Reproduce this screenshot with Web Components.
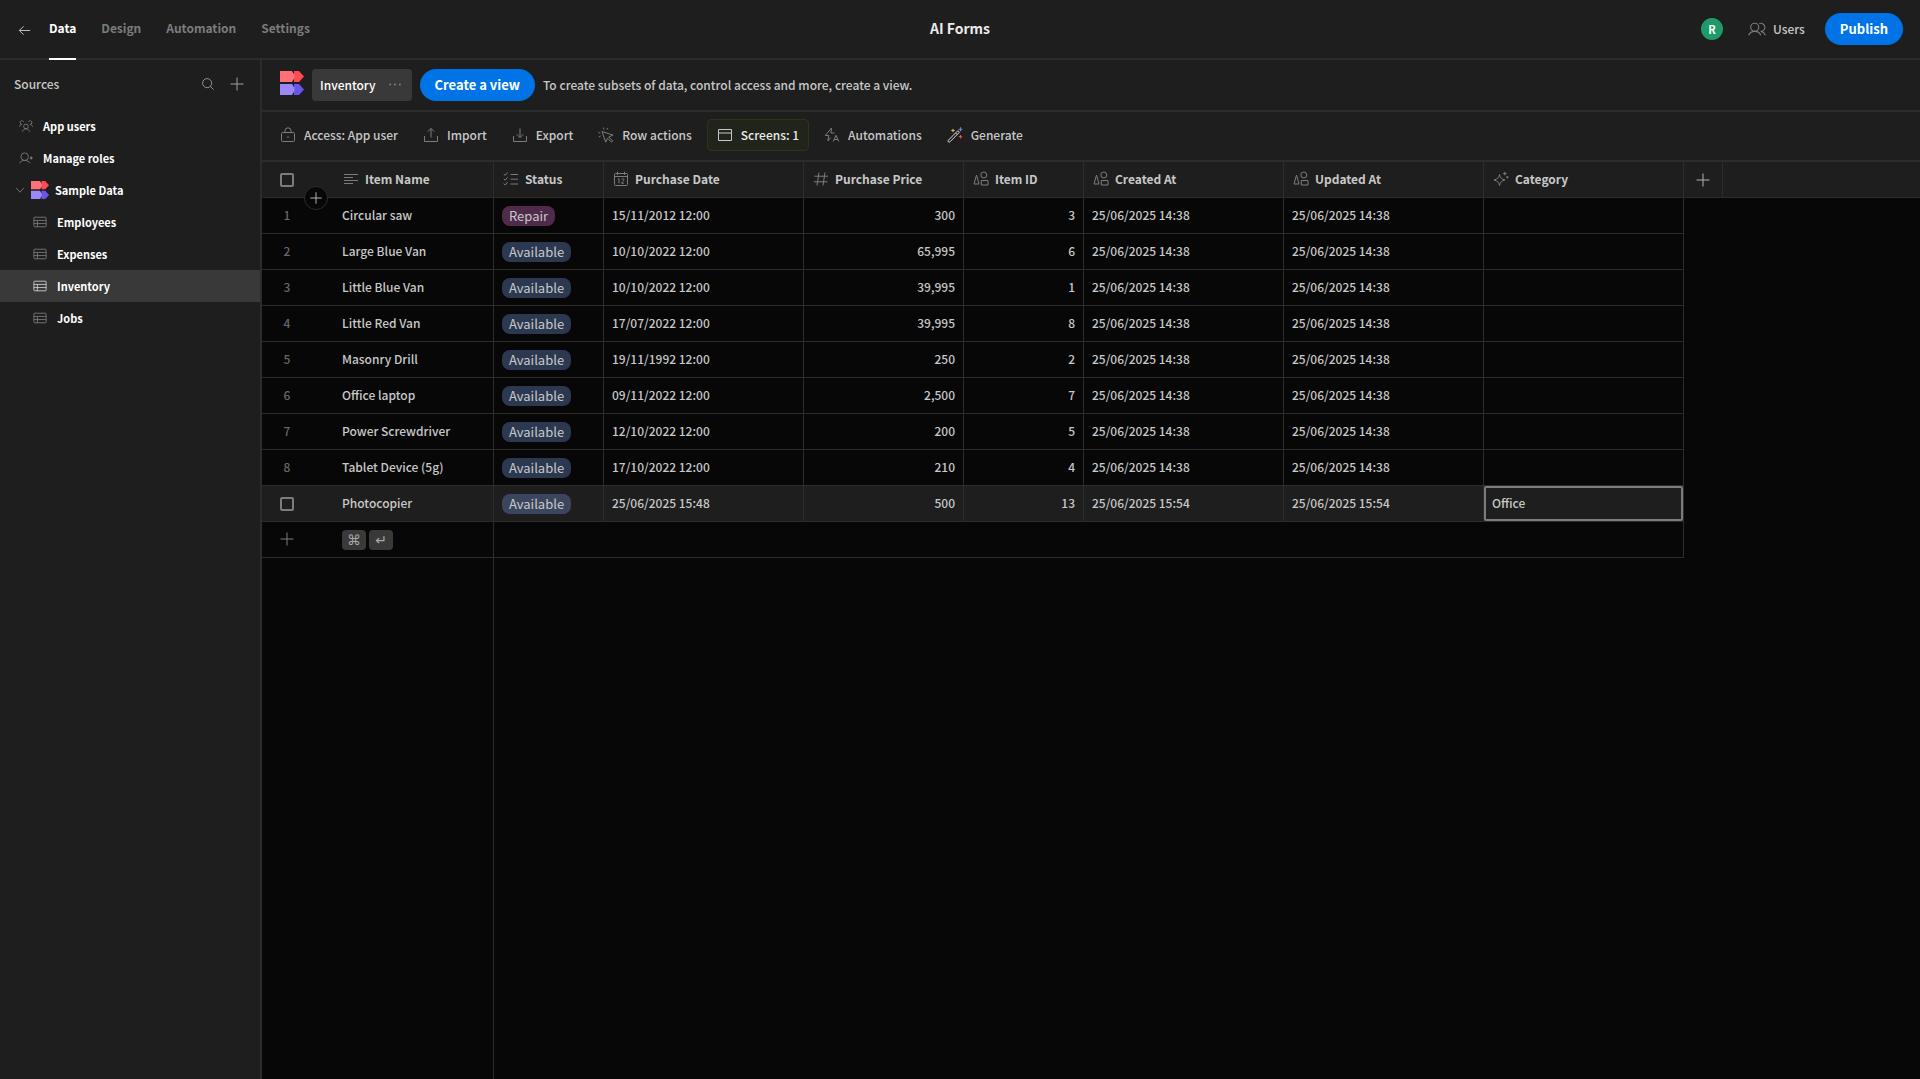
<!DOCTYPE html>
<html lang="en">
<head>
<meta charset="utf-8">
<meta name="viewport" content="width=device-width, initial-scale=1">
<title>AI Forms</title>
<style>
	:root{
		--bg:#1e1e1e;
		--bg-grid:#070707;
		--line:#2c2c2c;
		--hover:#393939;
		--text:#c8c8c8;
		--text-strong:#ebebeb;
		--muted:#7c7c7c;
		--accent:#0073e6;
	}
	body{
		margin:0;
		background:var(--bg-grid);
		color:var(--text);
		font:500 12px/20px "Noto Sans CJK SC","Noto Sans",sans-serif;
	}
</style>
</head>
<body>
<app-shell>
	<top-bar slot="top"></top-bar>
	<source-panel slot="side">
		<source-item icon="group">App users</source-item>
		<source-item icon="role">Manage roles</source-item>
		<source-item icon="logo" open>Sample Data</source-item>
		<source-item icon="table" nested>Employees</source-item>
		<source-item icon="table" nested>Expenses</source-item>
		<source-item icon="table" nested selected>Inventory</source-item>
		<source-item icon="table" nested>Jobs</source-item>
	</source-panel>
	<view-bar></view-bar>
	<tool-bar>
		<tool-button icon="lock">Access: App user</tool-button>
		<tool-button icon="upload">Import</tool-button>
		<tool-button icon="download">Export</tool-button>
		<tool-button icon="cursor">Row actions</tool-button>
		<tool-button icon="screen" active>Screens: 1</tool-button>
		<tool-button icon="bolt">Automations</tool-button>
		<tool-button icon="wand">Generate</tool-button>
	</tool-bar>
	<data-grid></data-grid>
</app-shell>

<script>
const icons={
	back:`<path d="M14 8H2.5M7 3.5 2.5 8 7 12.5"/>`,
	search:`<circle cx="7" cy="7" r="5.2"/><path d="m10.8 10.8 3.7 3.7"/>`,
	plus:`<path d="M8 1.5v13M1.5 8h13"/>`,
	chevron:`<path d="m3.5 5.5 4.5 5 4.5-5"/>`,
	group:`<circle cx="8" cy="8.5" r="2.7"/><path d="M3.8 14.5c.6-2 2.2-3.3 4.2-3.3s3.6 1.3 4.2 3.3M.6 8.8c.2-1.400 1.200-2.400 2.700-2.600M3.300 6.200a2.100 2.100 0 1 1 2-3M15.400 8.800c-.2-1.400-1.200-2.400-2.700-2.600M12.700 6.200a2.100 2.100 0 1 0-2-3"/>`,
	role:`<circle cx="6.500" cy="6.500" r="4.300"/><path d="M.5 14c1-2.100 3-3.200 6-3.200s5 1.100 6 3.200"/><path fill="currentColor" d="m14 6.500 1.200 1.500L14 9.500 12.800 8z"/>`,
	table:`<rect x="1" y="2.500" width="14" height="11" rx="1"/><path d="M1 6.200h14M1 9.800h14M5 6.200v7.300"/>`,
	users:`<circle cx="6" cy="6.500" r="3.600"/><path d="M.6 13.500c1-2.200 2.900-3.400 5.400-3.400s4.400 1.200 5.400 3.400M10 3.200a3.600 3.600 0 1 1 1.600 6.900c1.700.3 3 1.500 3.900 3.400"/>`,
	dots:`<g fill="currentColor" stroke="none"><circle cx="2.500" cy="7.500" r="1.200"/><circle cx="8" cy="7.500" r="1.200"/><circle cx="13.500" cy="7.500" r="1.200"/></g>`,
	lock:`<rect x="1.500" y="5.500" width="13" height="9" rx="1"/><path d="M5 5.500V3.800a3 3 0 0 1 6 0v1.700"/><circle cx="8" cy="10" r=".4"/>`,
	upload:`<path d="M1.500 9v5.500h13V9M8 10.500v-9M4.800 4.600 8 1.400l3.200 3.200"/>`,
	download:`<path d="M1.500 9v5.500h13V9M8 1.500v9M4.800 7.400 8 10.600l3.200-3.200"/>`,
	cursor:`<path d="m4 4.500 11 3.600-4.300 1.900 4 4-1.200 1.200-4-4-1.800 4zM6 2.500 5.500.6M9 2.600l1-1.800M2.300 6 .5 5.600M2.600 9l-1.800 1"/>`,
	screen:`<path d="M1.500 2.500h13v11h-13zM1.500 6h13"/>`,
	bolt:`<path d="M7.500 1 1.300 8.500h3.500l-1 5.500 2.900-3.300M7.500 1l-.6 5h3.600M9.300 14.500l2.600-6.200 2.900 6.200M10.300 12.500h3.500"/>`,
	wand:`<path stroke="#d8d8d8" d="M1.300 13.300 10.200 4.300a1 1 0 0 1 1.600 1.600L3 14.800a1 1 0 0 1-1.700-1.500zM8.600 6l1.500 1.500"/><path stroke="#e3c04c" d="M6 1.800v3.400M4.300 3.500h3.400"/><path stroke="#7b83f0" d="M13.500.3v4M11.500 2.300h4"/><path stroke="#f2555f" d="M13.500 8v3.400M11.800 9.700h3.400"/>`,
	lines:`<path d="M1 3.500h14M1 6.500h9M1 9.500h14M1 12.500h9"/>`,
	checks:`<path d="m.8 3 1.400 1.400L4.600 1.500M.8 7.800l1.400 1.400 2.400-2.900M.8 12.600 2.200 14l2.400-2.900M7.500 3.500H15M7.500 8.200H15M7.500 13H15"/>`,
	calendar:`<rect x="1.500" y="2.500" width="13" height="12" rx="1"/><path d="M1.500 5.500h13M4.500.8v3M11.500.8v3M5 8.300l1-.6v4.600M8.500 8.300c.6-1 2.500-.8 2.400.5 0 1-1.600 2-2.500 3.400H11"/>`,
	hash:`<path d="M6 1.500 4 14.500M12 1.500l-2 13M1.500 5.200h13.500M1 10.800h13.500"/>`,
	shapes:`<path d="M3.500 4 1 13h5z"/><circle cx="10.800" cy="4" r="3"/><rect x="8.300" y="9.500" width="6.700" height="4.500"/>`,
	sparkle:`<path d="M6.500 3.500c.7 3.300 2 4.600 5.500 5.500-3.500.9-4.800 2.200-5.500 5.500C5.800 11.200 4.500 9.900 1 9c3.500-.9 4.800-2.200 5.500-5.500zM11.800.8v3.600M10 2.600h3.600M14.300 5v2.400M13.100 6.200h2.400"/>`
}

const logo=`<svg viewBox="0 0 24 24">
	<path fill="#ff4954" d="M14 0h5l5 5.500-5 5.500h-5z"/>
	<path fill="#ff7077" d="M0 0h12l2.500 4v3L12 11H0z"/>
	<path fill="#6a55ea" d="M14 13h5l5 5.500-5 5.500h-5z"/>
	<path fill="#9b88f8" d="M0 13h12l2.500 4v3L12 24H0z"/>
</svg>`

//shared reset for the controls inside each shadow root
const base=`
	*{box-sizing:border-box;}
	button,a{
		font:inherit;
		color:inherit;
		text-decoration:none;
		white-space:nowrap;
	}
	button{
		padding:0;
		border:0;
		background:none;
		cursor:pointer;
	}
	.cta{
		height:32px;
		padding:0 15px;
		border-radius:16px;
		background:var(--accent);
		color:#fff;
		font-size:13px;
		font-weight:700;
	}
`

class AppIcon extends HTMLElement{
	constructor(){
		super()
		this.attachShadow({mode:"open"})
	}

	connectedCallback(){
		let name=this.getAttribute("name")
		this.shadowRoot.innerHTML=`
			<style>
				:host{
					display:block;
					flex:none;
					width:16px;
					height:16px;
					color:var(--muted);
				}
				svg{
					display:block;
					width:100%;
					height:100%;
				}
			</style>
			${name=="logo"?logo:`<svg viewBox="0 0 16 16" fill="none" stroke="currentColor" stroke-linejoin="round" aria-hidden="true">${icons[name]}</svg>`}
		`
	}
}
customElements.define("app-icon",AppIcon)

class AppShell extends HTMLElement{
	constructor(){
		super()
		this.attachShadow({mode:"open"})
		this.shadowRoot.innerHTML=`
			<style>
				:host{
					display:flex;
					flex-direction:column;
					min-height:100vh;
				}
				.body{
					display:flex;
					flex:1;
				}
				main{
					display:flex;
					flex-direction:column;
					flex:1;
					min-width:0;
				}
			</style>
			<slot name="top"></slot>
			<div class="body">
				<slot name="side"></slot>
				<main><slot></slot></main>
			</div>
		`
	}
}
customElements.define("app-shell",AppShell)

class TopBar extends HTMLElement{
	constructor(){
		super()
		this.attachShadow({mode:"open"})
		this.shadowRoot.innerHTML=`
			<style>
				${base}
				:host{
					display:grid;
					grid-template-columns:1fr auto 1fr;
					align-items:center;
					height:60px;
					box-sizing:border-box;
					padding:0 17px;
					background:linear-gradient(var(--line),var(--line)) bottom/100% 2px no-repeat var(--bg);
				}
				nav,.right{
					display:flex;
					align-items:center;
				}
				nav{
					gap:25px;
					height:60px;
				}
				nav a{
					height:60px;
					line-height:56px;
					font-weight:700;
					color:var(--muted);
				}
				nav a[aria-current]{
					color:#fff;
					border-bottom:2px solid #fff;
				}
				nav .back{
					display:flex;
					align-items:center;
					margin-right:-8px;
				}
				.back app-icon{
					width:15px;
					height:15px;
					color:var(--text);
				}
				h1{
					margin:0;
					padding-bottom:4px;
					font-size:14px;
					line-height:56px;
					font-weight:700;
					color:var(--text-strong);
				}
				.right{
					justify-content:flex-end;
					padding-bottom:2px;
				}
				.avatar{
					width:22px;
					height:22px;
					border-radius:50%;
					background:#209a6b;
					color:#fff;
					font-size:11px;
					line-height:22px;
					font-weight:700;
					text-align:center;
				}
				.users{
					display:flex;
					align-items:center;
					gap:7px;
					margin:0 20px 0 25px;
				}
				.users app-icon{
					width:18px;
					height:18px;
				}
			</style>
			<nav>
				<a class="back" href="#apps" aria-label="Back"><app-icon name="back"></app-icon></a>
				<a href="#data" aria-current="page">Data</a>
				<a href="#design">Design</a>
				<a href="#automation">Automation</a>
				<a href="#settings">Settings</a>
			</nav>
			<h1>AI Forms</h1>
			<div class="right">
				<div class="avatar">R</div>
				<button class="users"><app-icon name="users"></app-icon>Users</button>
				<button class="cta">Publish</button>
			</div>
		`
	}
}
customElements.define("top-bar",TopBar)

class SourcePanel extends HTMLElement{
	constructor(){
		super()
		this.attachShadow({mode:"open"})
		this.shadowRoot.innerHTML=`
			<style>
				${base}
				:host{
					display:block;
					flex:none;
					width:262px;
					box-sizing:border-box;
					border-right:2px solid var(--line);
					background:var(--bg);
				}
				header{
					display:flex;
					align-items:center;
					gap:14px;
					height:50px;
					padding:0 15px 2px 14px;
				}
				h2{
					flex:1;
					margin:0;
					font:inherit;
				}
				app-icon{
					color:#a0a0a0;
				}
				app-icon[name=search]{
					width:14px;
				}
			</style>
			<header>
				<h2>Sources</h2>
				<button aria-label="Search"><app-icon name="search"></app-icon></button>
				<button aria-label="Add source"><app-icon name="plus"></app-icon></button>
			</header>
			<slot></slot>
		`
	}
}
customElements.define("source-panel",SourcePanel)

class SourceItem extends HTMLElement{
	constructor(){
		super()
		this.attachShadow({mode:"open"})
	}

	connectedCallback(){
		this.shadowRoot.innerHTML=`
			<style>
				${base}
				:host{
					display:block;
				}
				a{
					display:flex;
					align-items:center;
					gap:10px;
					height:32px;
					padding-left:19px;
					font-size:11px;
					font-weight:700;
					color:#fff;
				}
				app-icon{
					width:14px;
					height:14px;
				}
				:host([nested]) a{
					padding-left:33px;
				}
				:host([selected]) a{
					background:var(--hover);
				}
				:host([selected]) app-icon{
					color:#d0d0d0;
				}
				:host([open]) a{
					gap:4px;
					padding-left:13px;
				}
				app-icon[name=logo]{
					width:18px;
					height:18px;
					margin-right:2px;
				}
			</style>
			<a href="#source">
				${this.hasAttribute("open")?`<app-icon name="chevron"></app-icon>`:""}
				<app-icon name="${this.getAttribute("icon")}"></app-icon>
				<slot></slot>
			</a>
		`
	}
}
customElements.define("source-item",SourceItem)

class ViewBar extends HTMLElement{
	constructor(){
		super()
		this.attachShadow({mode:"open"})
		this.shadowRoot.innerHTML=`
			<style>
				${base}
				:host{
					display:flex;
					align-items:center;
					gap:8px;
					height:52px;
					box-sizing:border-box;
					padding:0 18px;
					border-bottom:2px solid var(--line);
					background:var(--bg);
				}
				.logo{
					width:24px;
					height:24px;
					margin-bottom:4px;
				}
				.view{
					display:flex;
					align-items:center;
					gap:12px;
					height:32px;
					padding:0 10px 0 8px;
					border-radius:4px;
					background:var(--hover);
					color:#fff;
				}
				.view app-icon{
					width:14px;
					height:14px;
				}
			</style>
			<app-icon class="logo" name="logo"></app-icon>
			<button class="view">Inventory<app-icon name="dots"></app-icon></button>
			<button class="cta">Create a view</button>
			<span>To create subsets of data, control access and more, create a view.</span>
		`
	}
}
customElements.define("view-bar",ViewBar)

class ToolBar extends HTMLElement{
	constructor(){
		super()
		this.attachShadow({mode:"open"})
		this.shadowRoot.innerHTML=`
			<style>
				:host{
					display:flex;
					align-items:center;
					gap:5px;
					height:50px;
					box-sizing:border-box;
					padding:0 8px 2px;
					border-bottom:2px solid var(--line);
					background:var(--bg);
				}
			</style>
			<slot></slot>
		`
	}
}
customElements.define("tool-bar",ToolBar)

class ToolButton extends HTMLElement{
	constructor(){
		super()
		this.attachShadow({mode:"open"})
	}

	connectedCallback(){
		this.shadowRoot.innerHTML=`
			<style>
				${base}
				:host{
					display:block;
				}
				button{
					display:flex;
					align-items:center;
					gap:8px;
					height:32px;
					padding:0 9px;
					border:1px solid transparent;
					border-radius:4px;
				}
				:host([active]) button{
					border-color:#2b3518;
					background:#20241a;
					color:var(--text-strong);
				}
				:host([active]) app-icon{
					color:var(--text);
				}
			</style>
			<button><app-icon name="${this.getAttribute("icon")}"></app-icon><slot></slot></button>
		`
	}
}
customElements.define("tool-button",ToolButton)

class DataGrid extends HTMLElement{
	constructor(){
		super()
		this.attachShadow({mode:"open"})
		this.columns=[
			{name:"Status",icon:"checks",width:110},
			{name:"Purchase Date",icon:"calendar",width:200},
			{name:"Purchase Price",icon:"hash",width:160,number:true},
			{name:"Item ID",icon:"shapes",width:120,number:true},
			{name:"Created At",icon:"shapes",width:200},
			{name:"Updated At",icon:"shapes",width:200},
			{name:"Category",icon:"sparkle",width:200}
		]
		let seeded="25/06/2025 14:38"
		let added="25/06/2025 15:54"
		this.rows=[
			["Circular saw","Repair","15/11/2012 12:00","300","3",seeded,seeded,""],
			["Large Blue Van","Available","10/10/2022 12:00","65,995","6",seeded,seeded,""],
			["Little Blue Van","Available","10/10/2022 12:00","39,995","1",seeded,seeded,""],
			["Little Red Van","Available","17/07/2022 12:00","39,995","8",seeded,seeded,""],
			["Masonry Drill","Available","19/11/1992 12:00","250","2",seeded,seeded,""],
			["Office laptop","Available","09/11/2022 12:00","2,500","7",seeded,seeded,""],
			["Power Screwdriver","Available","12/10/2022 12:00","200","5",seeded,seeded,""],
			["Tablet Device (5g)","Available","17/10/2022 12:00","210","4",seeded,seeded,""],
			["Photocopier","Available","25/06/2025 15:48","500","13",added,added,"Office"]
		]
		this.active=8
	}

	connectedCallback(){
		this.shadowRoot.innerHTML=`
			<style>
				${base}
				:host{
					display:flex;
					flex-direction:column;
					flex:1;
					background:var(--bg-grid);
				}
				table{
					width:100%;
					table-layout:fixed;
					border-spacing:0;
				}
				th,td{
					height:36px;
					padding:0 8px;
					border-right:1px solid var(--line);
					border-bottom:1px solid var(--line);
					text-align:left;
					font-weight:inherit;
					white-space:nowrap;
				}
				td{
					padding-bottom:2px;
				}
				th{
					background:var(--bg);
					font-weight:700;
				}
				.gutter{
					position:relative;
					padding-left:0;
					padding-right:0;
					border-right:0;
					text-align:center;
					color:#686868;
				}
				.name{
					padding-left:30px;
				}
				.number{
					text-align:right;
				}
				.status,.select,.shortcut{
					padding-bottom:0;
				}
				.rest{
					border-right:0;
				}
				td.rest{
					border-bottom:0;
				}
				.label{
					display:flex;
					align-items:center;
					gap:5px;
					padding-bottom:1px;
				}
				.label app-icon{
					width:18px;
				}
				.new{
					padding:0;
				}
				.new button,.gutter button{
					display:block;
					margin:0 auto;
				}
				.new app-icon{
					color:#b0b0b0;
				}
				input{
					appearance:none;
					display:block;
					width:14px;
					height:14px;
					margin:0 auto;
					border:2px solid #7c7c7c;
					border-radius:2px;
				}
				.gutter .insert{
					position:absolute;
					z-index:1;
					left:42px;
					bottom:-13px;
					width:24px;
					height:24px;
					border:1px solid var(--line);
					border-radius:50%;
					background:var(--bg-grid);
				}
				.insert app-icon{
					width:14px;
					height:14px;
					margin:0 auto;
					color:var(--text);
				}
				.pill{
					display:block;
					width:fit-content;
					height:20px;
					padding:0 7px;
					border-radius:8px;
					background:#2c3850;
					font-size:13px;
					font-weight:400;
				}
				.pill.repair{
					background:#4f2b4b;
				}
				.active td:not(.rest){
					background:var(--bg);
				}
				.active .pill{
					background:#3b465e;
				}
				.focus{
					position:relative;
				}
				.focus::after{
					content:"";
					position:absolute;
					inset:0;
					border:2px solid var(--muted);
					border-radius:2px;
				}
				kbd{
					width:24px;
					height:20px;
					border-radius:4px;
					background:var(--hover);
					color:#a8a8a8;
					font:14px/20px "DejaVu Sans",sans-serif;
					text-align:center;
				}
				.keys{
					display:flex;
					gap:3px;
				}
				.filler{
					flex:1;
					width:232px;
					border-right:1px solid var(--line);
				}
			</style>
			<table>
				<colgroup>
					<col style="width:50px">
					<col style="width:182px">
					${this.columns.map(c=>`<col style="width:${c.width}px">`).join("")}
					<col style="width:39px">
					<col>
				</colgroup>
				<thead>
					<tr>
						<th class="gutter">
							<input type="checkbox" aria-label="Select all rows">
							<button class="insert" aria-label="Insert row"><app-icon name="plus"></app-icon></button>
						</th>
						<th class="name"><div class="label"><app-icon name="lines"></app-icon>Item Name</div></th>
						${this.columns.map(c=>`<th><div class="label"><app-icon name="${c.icon}"></app-icon>${c.name}</div></th>`).join("")}
						<th class="new"><button aria-label="Add column"><app-icon name="plus"></app-icon></button></th>
						<th class="rest"></th>
					</tr>
				</thead>
				<tbody>
					${this.rows.map((row,i)=>this.row(row,i)).join("")}
					<tr>
						<td class="gutter"><button aria-label="Add row"><app-icon name="plus"></app-icon></button></td>
						<td class="name shortcut"><div class="keys"><kbd>⌘</kbd><kbd>↵</kbd></div></td>
						<td colspan="${this.columns.length}"></td>
						<td class="rest" colspan="2"></td>
					</tr>
				</tbody>
			</table>
			<div class="filler"></div>
		`
	}

	row(row,i){
		let active=i==this.active
		let cells=this.columns.map((c,n)=>{
			let value=row[n+1]
			let kind=c.number?"number":""
			if(n==0){
				value=`<span class="pill ${value.toLowerCase()}">${value}</span>`
				kind="status"
			}
			if(active&&n==this.columns.length-1)kind="focus"
			return `<td class="${kind}">${value}</td>`
		})
		return `
			<tr class="${active?"active":""}">
				<td class="gutter ${active?"select":""}">${active?`<input type="checkbox" aria-label="Select ${row[0]}">`:i+1}</td>
				<td class="name">${row[0]}</td>
				${cells.join("")}
				<td class="rest" colspan="2"></td>
			</tr>
		`
	}
}
customElements.define("data-grid",DataGrid)
</script>
</body>
</html>
